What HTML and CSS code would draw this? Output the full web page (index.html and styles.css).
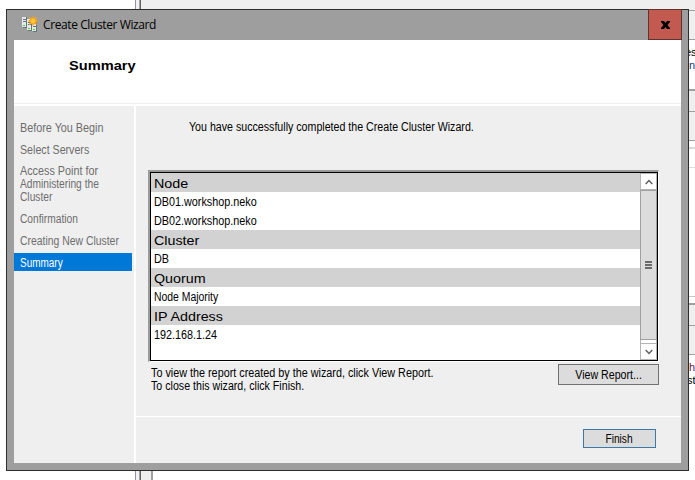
FILE: index.html
```html
<!DOCTYPE html>
<html lang="en">
<head>
<meta charset="utf-8">
<title>Create Cluster Wizard</title>
<link rel="stylesheet" href="styles.css">
</head>
<body>
<div class="backdrop">
  <div class="tree-pane"></div>
  <div class="splitter"></div>
  <div class="top-strip"></div>
  <div class="bottom-strip"></div>
  <div class="details">
    <div class="band band-title"></div>
    <div class="band band-toolbar"></div>
    <div class="band band-text"><p>es</p><p class="link">n</p></div>
    <div class="band band-group"></div>
    <div class="band band-head"></div>
    <div class="band band-gap"></div>
    <div class="band band-row"></div>
    <div class="band band-list"></div>
    <div class="band band-space"></div>
    <div class="band band-group-low"></div>
    <div class="band band-tabs"></div>
    <div class="band band-foot"><p class="visited">h</p><p>st</p></div>
  </div>
</div>

<main class="window">
  <header class="titlebar">
    <svg class="app-icon" width="16" height="16" viewBox="0 0 16 16">
      <path fill="#e3e8ea" d="M0 1h4v10H0zM5 3h4v11H5zM10 5h4v10h-4z"/>
      <path fill="#66757c" d="M4 1h1v10H4zM9 3h1v11H9zM14 6h1v9h-1zM1 3h3v1H1zM1 5h3v1H1zM6 6h3v1H6zM6 8h3v1H6zM11 10h3v1h-3zM1 11h4v1H1zM6 14h4v1H6zM11 15h4v1h-4z"/>
      <path fill="#4fd22b" d="M1 9h2v1H1zM6 12h2v1H6zM11 13h2v1h-2z"/>
      <path fill="#f6a51b" d="M11 0l1.300 2L15 1l-.8 2.700L16 5l-1.800 1.300.8 2.700-2.700-.9L11 10 9.800 8 7 9l.9-2.700L6 5l1.900-1.300L7 1l2.800 1z"/>
      <circle cx="11" cy="5" r="2.200" fill="#ffc83d"/>
    </svg>
    <h1 class="caption">Create Cluster Wizard</h1>
    <button class="close" aria-label="Close"><svg width="9" height="8" viewBox="0 0 9 8"><path d="M0 0h3l1.500 2L6 0h3v1L6.500 4 9 7v1H6L4.500 6 3 8H0V7l2.500-3L0 1z"/></svg></button>
  </header>
  <div class="client">
    <div class="banner"><h2>Summary</h2></div>
    <div class="content">
      <nav class="steps">
        <a><span class="t w90">Before You Begin</span></a>
        <a><span class="t w88">Select Servers</span></a>
        <a class="tall"><span class="t w90">Access Point for</span><br><span class="t w85">Administering the</span><br><span class="t w85">Cluster</span></a>
        <a><span class="t w85">Confirmation</span></a>
        <a><span class="t w87">Creating New Cluster</span></a>
        <a class="current"><span class="t w83">Summary</span></a>
      </nav>
      <section class="page">
        <div class="body">
          <p class="done"><span class="t w88">You have successfully completed the Create Cluster Wizard.</span></p>
          <div class="report">
            <div class="frame">
              <div class="rows">
                <h3><span class="t">Node</span></h3>
                <p><span class="t w90">DB01.workshop.neko</span></p>
                <p><span class="t w90">DB02.workshop.neko</span></p>
                <h3><span class="t">Cluster</span></h3>
                <p><span class="t w90">DB</span></p>
                <h3><span class="t">Quorum</span></h3>
                <p><span class="t w87">Node Majority</span></p>
                <h3><span class="t">IP Address</span></h3>
                <p><span class="t w90">192.168.1.24</span></p>
              </div>
              <div class="scrollbar">
                <div class="arrow"><svg width="8" height="6" viewBox="0 0 8 6"><path d="M.7 5L4 1.500 7.300 5"/></svg></div>
                <div class="thumb"><i></i><i></i><i></i></div>
                <div class="arrow"><svg width="8" height="6" viewBox="0 0 8 6"><path d="M.7 1L4 4.500 7.300 1"/></svg></div>
              </div>
            </div>
          </div>
          <div class="hint">
            <div class="hint-text"><p><span class="t w90">To view the report created by the wizard, click View Report.</span></p><p><span class="t w88">To close this wizard, click Finish.</span></p></div>
            <button class="btn view"><span class="t w88">View Report...</span></button>
          </div>
        </div>
        <footer class="actions"><button class="btn finish"><span class="t w85">Finish</span></button></footer>
      </section>
    </div>
  </div>
</main>
</body>
</html>
```
FILE: styles.css
```css
* { box-sizing: border-box; margin: 0; padding: 0; }
body {
  width: 695px; height: 480px; overflow: hidden; position: relative;
  background: #fff; color: #000;
  font: 12px/13px "Liberation Sans", Arial, sans-serif;
}
h1, h2, h3 { font-weight: normal; }
p, h1, h2, h3, a { white-space: nowrap; }
button { font: inherit; color: inherit; }

/* condensed dialog lettering */
.t { display: inline-block; transform-origin: 0 50%; }
.w90 { transform: scaleX(.9); }
.w88 { transform: scaleX(.887); }
.w87 { transform: scaleX(.867); }
.w85 { transform: scaleX(.85); }
.w83 { transform: scaleX(.83); }

/* application behind the dialog */
.backdrop {
  height: 480px; display: grid;
  grid-template-columns: 135px 6px 548px 6px;
  grid-template-rows: 10px 460px 10px;
}
.tree-pane { grid-row: 1 / 4; background: #fff; }
.splitter { grid-row: 1 / 4; border-left: 1px solid #92909b; border-right: 1px solid #646464; background: linear-gradient(90deg, #f2f2f5 3px, #a0a0a0 3px); }
.top-strip { grid-column: 3; grid-row: 1; background: #efefef; }
.bottom-strip { grid-column: 3; grid-row: 3; background: linear-gradient(90deg, #efefef 10px, #a0a0a0 10px 12px, #fff 12px); }
.details { grid-column: 4; grid-row: 1 / 4; overflow: hidden; }
.band { background: #efefef; border-bottom: 1px solid #a0a0a0; }
.band-title { height: 11px; }
.band-toolbar { height: 29px; }
.band-text { height: 51px; background: #fff; border-bottom-width: 2px; padding-top: 6px; }
.band-group { height: 21px; }
.band-head { height: 29px; }
.band-gap { height: 8px; background: linear-gradient(#fff 6px, #d9d9d9 6px); border: 0; }
.band-row { height: 19px; background: #fff; border-color: #dedede; }
.band-list { height: 129px; background: #fff; border-color: #c8c8c8; }
.band-space { height: 8px; background: #fff; border-bottom-width: 2px; }
.band-group-low { height: 21px; }
.band-tabs { height: 29px; }
.band-foot { height: 125px; background: #fff; border: 0; padding-top: 6px; }
.band p { margin-left: -4px; font-size: 11px; }
.band-foot p { margin-left: -2px; }
.band .link { margin-left: 0; color: #173a78; }
.band .visited { margin-left: 0; color: #6b2430; }

/* dialog window */
.window {
  position: absolute; left: 6px; top: 9px; width: 683px; height: 462px;
  border: 1px solid #2d2d2f; background: #9e9e9e; padding: 0 7px 7px;
}
.titlebar { height: 30px; display: flex; margin-right: -1px; }
.app-icon { margin: 6px 0 0 8px; }
.caption { font: 12px/16px "Open Sans", "Noto Sans", sans-serif; margin: 7px 0 0 5px; flex: 1; letter-spacing: -.4px; }
.close {
  width: 34px; height: 31px; margin-top: -1px; background: #c25a50;
  border: 1px solid #603331; display: flex; align-items: center; justify-content: center;
}
.client { height: 423px; display: flex; flex-direction: column; background: #fff; }
.banner { height: 64px; border-bottom: 1px solid #efefef; padding: 18px 0 0 55px; }
.banner h2 { width: max-content; font: bold 13px/15px "Liberation Sans", Arial, sans-serif; transform: scaleX(1.125); transform-origin: 0 50%; }
.content { margin-top: 2px; flex: 1; display: flex; gap: 2px; }
.steps { width: 120px; background: #efefef; padding: 13px 2px 0 0; color: #6d6d6d; display: flex; flex-direction: column; }
.steps a { display: block; height: 18px; line-height: 18px; padding-left: 6px; margin-bottom: 4px; }
.steps .tall { height: 44px; line-height: 13px; padding-top: 2px; margin-bottom: 3px; }
.steps .tall .t { vertical-align: top; }
.steps .current { background: #0078d7; color: #fff; margin-top: -1px; line-height: 20px; }
.page { width: 545px; display: flex; flex-direction: column; }
.body { height: 310px; background: #efefef; margin-bottom: 1px; padding: 15px 22px 0 12px; }
.done { padding-left: 41px; height: 49px; }
.report { width: 511px; height: 192px; border: solid; border-width: 2px 1px 1px 2px; border-color: #9a9a9a #fff #fff #9a9a9a; }
.frame { height: 189px; border: 1px solid #000; display: flex; background: #fff; }
.rows { flex: 1; }
.rows h3, .rows p { height: 19px; padding-left: 3px; line-height: 20px; }
.rows h3 { background: #d2d2d2; font-size: 13px; line-height: 21px; }
.rows h3 .t { transform: scaleX(1.1); }
.scrollbar { width: 17px; display: flex; flex-direction: column; background: #fff; border-left: 1px solid #b4b4b4; border-right: 1px solid #b4b4b4; }
.arrow { height: 17px; border: solid #b4b4b4; border-width: 1px 0; display: flex; align-items: center; justify-content: center; }
.arrow path { fill: none; stroke: #606060; stroke-width: 1.5; }
.thumb { height: 150px; margin: 0 -1px 3px; border: 1px solid #a0a0a0; background: #dcdcdc; display: flex; flex-direction: column; align-items: center; justify-content: center; gap: 1px; }
.thumb i { width: 7px; height: 2px; background: #6a6a6a; }
.hint { display: flex; justify-content: space-between; padding: 2px 0 0 3px; width: 511px; }
.hint-text { padding-top: 3px; }
.btn { background: #dcdcdc; border: 1px solid #707070; text-align: center; white-space: nowrap; padding-top: 1px; }
.btn .t { transform-origin: 50% 50%; }
.view { width: 101px; height: 21px; }
.actions { flex: 1; background: #efefef; display: flex; justify-content: flex-end; padding: 12px 25px 0 0; }
.finish { width: 73px; height: 19px; border-color: #3c78a8; }
```
